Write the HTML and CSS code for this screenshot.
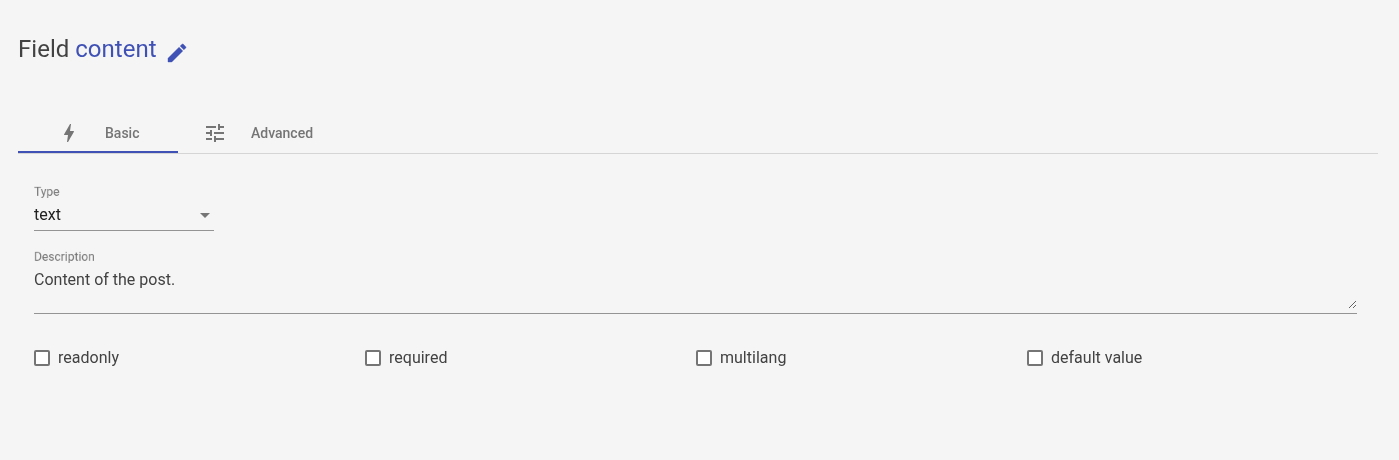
FILE: index.html
```
<!DOCTYPE html>
<html lang="en">
<head>
<meta charset="utf-8">
<title>Field content</title>
<link rel="stylesheet" href="styles.css">
</head>
<body>
<main class="page">
  <h1 class="title">Field <span class="name">content</span>
    <svg class="icon edit" viewBox="0 0 24 24"><path d="M3 17.25V21h3.75L17.81 9.94l-3.75-3.75L3 17.25zM20.71 7.04a1 1 0 0 0 0-1.41l-2.34-2.34a1 1 0 0 0-1.41 0l-1.83 1.83 3.75 3.75 1.83-1.83z"/></svg>
  </h1>
  <nav class="tabs">
    <a class="tab active"><svg class="icon" viewBox="0 0 24 24"><path d="M11 21h-1l1-7H7.5c-.88 0-.33-.75-.31-.78C8.48 10.94 10.42 7.54 13.01 3h1l-1 7h3.51c.4 0 .62.19.4.66C12.97 17.55 11 21 11 21z"/></svg><span>Basic</span></a>
    <a class="tab advanced"><svg class="icon" viewBox="0 0 24 24"><path d="M3 17v2h6v-2H3zM3 5v2h10V5H3zm10 16v-2h8v-2h-8v-2h-2v6h2zM7 9v2H3v2h4v2h2V9H7zm14 4v-2H11v2h10zm-6-4h2V7h4V5h-4V3h-2v6z"/></svg><span>Advanced</span></a>
  </nav>
  <section class="form">
    <div class="field type">
      <label class="label">Type</label>
      <div class="select"><span>text</span><i class="arrow"></i></div>
    </div>
    <div class="field description">
      <label class="label" for="desc">Description</label>
      <textarea id="desc" class="textarea" spellcheck="false">Content of the post.</textarea>
    </div>
    <div class="checks">
      <label class="check"><i class="box"></i>readonly</label>
      <label class="check"><i class="box"></i>required</label>
      <label class="check"><i class="box"></i>multilang</label>
      <label class="check"><i class="box"></i>default value</label>
    </div>
  </section>
</main>
</body>
</html>
```
FILE: styles.css
```
* { box-sizing: border-box; }
body { margin: 0; background: #f5f5f5; color: #424242; font: 16px/24px Roboto, sans-serif; }
.page { height: 460px; padding: 33px 21px 0 18px; will-change: transform; }
.title { display: flex; align-items: center; height: 32px; margin: 0; font-size: 24px; line-height: 32px; font-weight: 400; letter-spacing: .02px; white-space: pre; }
.name { color: #3f51b5; }
.icon { display: block; flex: none; width: 24px; height: 24px; fill: currentColor; }
.edit { margin: 7px 0 0 8px; color: #3f51b5; stroke: currentColor; stroke-width: .4; }
.tabs { display: flex; height: 49px; margin-top: 40px; border-bottom: 1px solid #d5d5d5; }
.tab { display: flex; align-items: center; gap: 24px; width: 160px; height: 48px; padding: 8px 0 0 39px; color: #757575; font-size: 14px; font-weight: 500; }
.active { padding-top: 10px; border-bottom: 2px solid #3f51b5; }
.advanced { padding-left: 25px; }
.form { padding: 29px 0 0 16px; }
.field { display: flex; flex-direction: column; }
.label { height: 18px; color: #757575; font-size: 16px; line-height: 24px; transform: perspective(100px) scale(.75) translateZ(.001px); transform-origin: 0 0; white-space: nowrap; }
.type { width: 180px; height: 48px; border-bottom: 1px solid #949494; }
.select { display: flex; align-items: center; justify-content: space-between; height: 27px; color: #212121; }
.arrow { width: 0; margin: 2px 4px 0 0; border: 5px solid transparent; border-top-color: #757575; border-bottom: 0; }
.description { height: 65px; margin: 18px 21px 0 0; border-bottom: 1px solid #949494; }
.description .label { margin-top: -1px; margin-bottom: 1px; }
.textarea { height: 42px; padding: 1px 0 0; border: 0; outline: 0; background: transparent; color: #424242; font: inherit; resize: vertical; }
.checks { display: grid; grid-template-columns: repeat(4, 331px); margin-top: 32px; }
.check { display: flex; align-items: center; gap: 8px; letter-spacing: .01px; }
.box { width: 16px; height: 16px; border: 2px solid #757575; border-radius: 2px; background: #fff; }
```
